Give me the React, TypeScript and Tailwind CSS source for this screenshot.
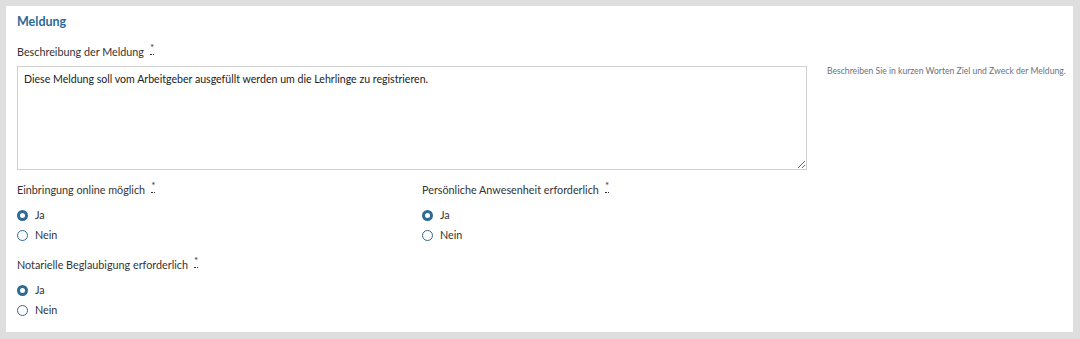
import React from "react";

const font = { fontFamily: "Lato, 'Noto Sans', sans-serif" };

function Req() {
  return (
    <abbr
      title="Pflichtfeld"
      className="ml-[6px] inline-block align-top text-[10px] leading-[10px] no-underline border-b border-dotted border-[#333] pb-[2px] text-[#333]"
    >
      *
    </abbr>
  );
}

function Radio({ checked, label }: { checked?: boolean; label: string }) {
  return (
    <label className="flex items-center h-[20px] gap-[7px] text-[10.8px] text-[#333]">
      <span
        className={
          checked
            ? "w-[11px] h-[11px] rounded-full border-[3.5px] border-[#2d6a94] bg-white"
            : "w-[11px] h-[11px] rounded-full border-[1.5px] border-[#2d6a94] bg-white"
        }
      />
      <span>{label}</span>
    </label>
  );
}

function RadioGroup({ label }: { label: string }) {
  return (
    <div>
      <div className="text-[10.8px] text-[#333] h-[20px] leading-[20px]">
        {label}
        <Req />
      </div>
      <div className="mt-[5px]">
        <Radio checked label="Ja" />
        <Radio label="Nein" />
      </div>
    </div>
  );
}

export default function App() {
  return (
    <div className="w-[1080px] h-[339px] bg-[#dedede] p-[6px] pr-[7px] pb-[7px]" style={font}>
      <div className="bg-white h-full pl-[11px] pt-[6px]">
        <h2 className="text-[12.5px] font-bold text-[#2b6a9a] leading-[20px]">Meldung</h2>
        <div className="flex mt-[10px]">
          <div className="w-[790px]">
            <div className="text-[10.8px] text-[#333] h-[20px] leading-[20px]">
              Beschreibung der Meldung
              <Req />
            </div>
            <textarea
              readOnly
              className="mt-[4px] block w-[790px] h-[104px] border border-[#d0d0d0] px-[6px] py-[5px] text-[10.6px] text-[#222] resize-y outline-none"
              defaultValue="Diese Meldung soll vom Arbeitgeber ausgefüllt werden um die Lehrlinge zu registrieren."
            />
            <div className="grid grid-cols-2 gap-x-[20px] mt-[10px]">
              <RadioGroup label="Einbringung online möglich" />
              <RadioGroup label="Persönliche Anwesenheit erforderlich" />
            </div>
            <div className="mt-[10px]">
              <RadioGroup label="Notarielle Beglaubigung erforderlich" />
            </div>
          </div>
          <div className="ml-[20px] pt-[23px] text-[8.6px] text-[#6b7280] whitespace-nowrap">
            Beschreiben Sie in kurzen Worten Ziel und Zweck der Meldung.
          </div>
        </div>
      </div>
    </div>
  );
}
